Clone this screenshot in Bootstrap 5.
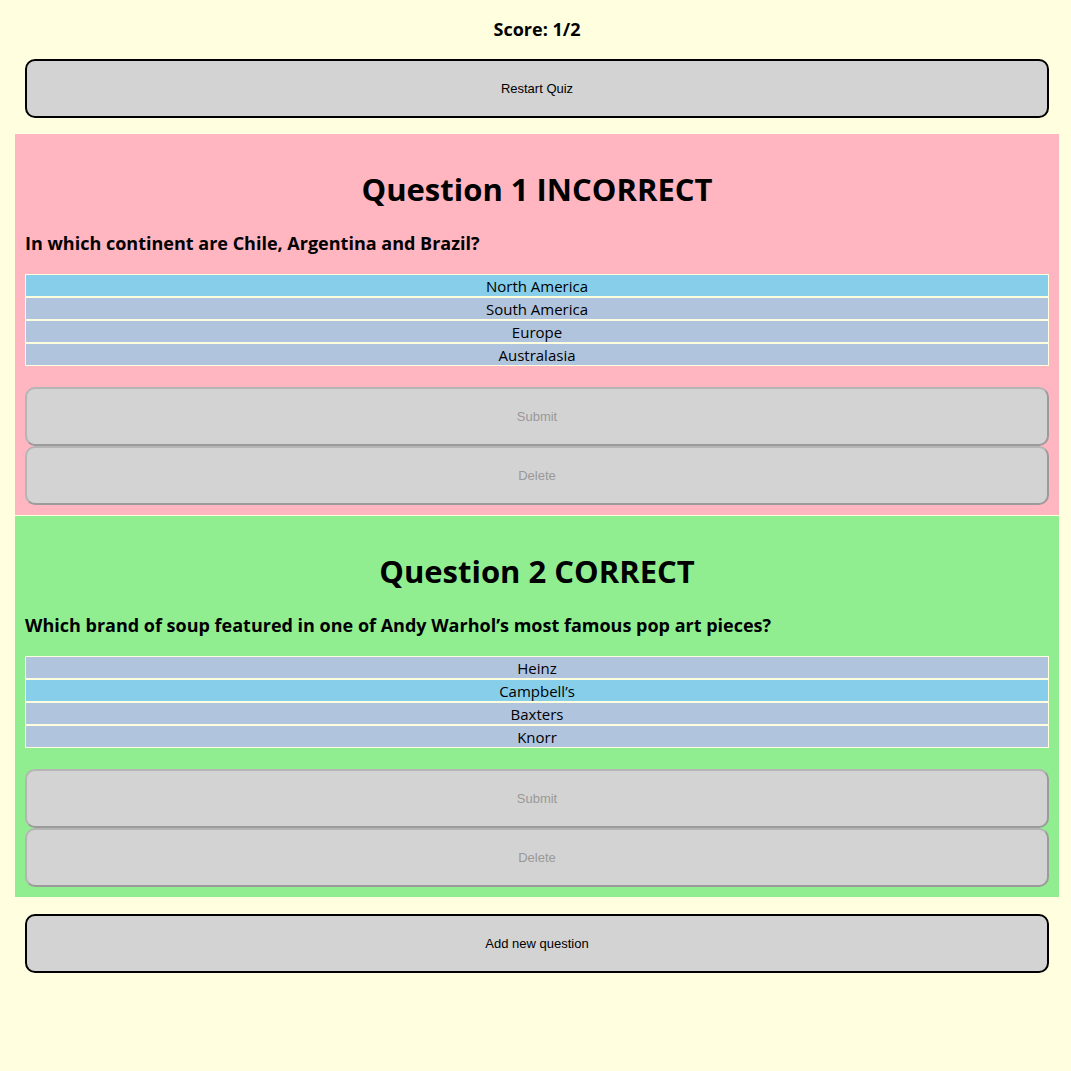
<!DOCTYPE html>
<html lang="en">
<head>
<meta charset="utf-8">
<meta name="viewport" content="width=device-width, initial-scale=1">
<title>Quiz</title>
<link href="https://cdn.jsdelivr.net/npm/bootstrap@5.3.0/dist/css/bootstrap.min.css" rel="stylesheet">
<style>
body { background: #ffffe0; color: #000; font-family: "Segoe UI", "Open Sans", "Noto Sans", sans-serif; }
.quiz { padding: 17px 12px 17px 15px; }
.quiz-bar { padding: 0 10px; }
.score { font-size: 18px; line-height: 24px; margin-bottom: 18px; }
.quiz-btn { display: block; width: 100%; height: 59px; border: 2px solid #000; border-radius: 10px; background: #d3d3d3; color: #000; font-family: Arial, "Liberation Sans", sans-serif; font-size: 13px; line-height: 15px; }
.quiz-btn:disabled { color: #999; border-color: #b5b5b5 #9b9b9b #9b9b9b #b5b5b5; }
.question-list { display: grid; gap: 1px; margin: 16px 0 17px; }
.question { padding: 34px 10px 10px; }
.question.incorrect { background: #ffb6c1; }
.question.correct { background: #90ee90; }
.question-title { font-size: 31px; line-height: 43px; margin-bottom: 20px; }
.question-text { font-size: 18px; line-height: 24px; margin-bottom: 19px; }
.answers { margin-bottom: 21px; }
.answer { display: block; padding-top: 2px; border: 1px solid #ffffe0; background: #b0c4de; font-size: 15px; line-height: 19px; }
.btn-check:checked + .answer { background: #87ceeb; }
</style>
</head>
<body>
<main class="quiz text-center">
  <header class="quiz-bar">
    <h2 class="score fw-bold">Score: 1/2</h2>
    <button type="button" class="quiz-btn">Restart Quiz</button>
  </header>

  <div class="question-list">
    <section class="question incorrect">
      <h1 class="question-title fw-bold">Question 1 INCORRECT</h1>
      <h3 class="question-text fw-bold text-start" id="q1">In which continent are Chile, Argentina and Brazil?</h3>
      <div class="answers" role="radiogroup" aria-labelledby="q1">
        <input class="btn-check" type="radio" name="q1" id="q1a" checked><label class="answer" for="q1a">North America</label>
        <input class="btn-check" type="radio" name="q1" id="q1b"><label class="answer" for="q1b">South America</label>
        <input class="btn-check" type="radio" name="q1" id="q1c"><label class="answer" for="q1c">Europe</label>
        <input class="btn-check" type="radio" name="q1" id="q1d"><label class="answer" for="q1d">Australasia</label>
      </div>
      <button type="button" class="quiz-btn" disabled>Submit</button>
      <button type="button" class="quiz-btn" disabled>Delete</button>
    </section>

    <section class="question correct">
      <h1 class="question-title fw-bold">Question 2 CORRECT</h1>
      <h3 class="question-text fw-bold text-start" id="q2">Which brand of soup featured in one of Andy Warhol’s most famous pop art pieces?</h3>
      <div class="answers" role="radiogroup" aria-labelledby="q2">
        <input class="btn-check" type="radio" name="q2" id="q2a"><label class="answer" for="q2a">Heinz</label>
        <input class="btn-check" type="radio" name="q2" id="q2b" checked><label class="answer" for="q2b">Campbell’s</label>
        <input class="btn-check" type="radio" name="q2" id="q2c"><label class="answer" for="q2c">Baxters</label>
        <input class="btn-check" type="radio" name="q2" id="q2d"><label class="answer" for="q2d">Knorr</label>
      </div>
      <button type="button" class="quiz-btn" disabled>Submit</button>
      <button type="button" class="quiz-btn" disabled>Delete</button>
    </section>
  </div>

  <footer class="quiz-bar">
    <button type="button" class="quiz-btn">Add new question</button>
  </footer>
</main>
<script src="https://cdn.jsdelivr.net/npm/bootstrap@5.3.0/dist/js/bootstrap.bundle.min.js"></script>
</body>
</html>
